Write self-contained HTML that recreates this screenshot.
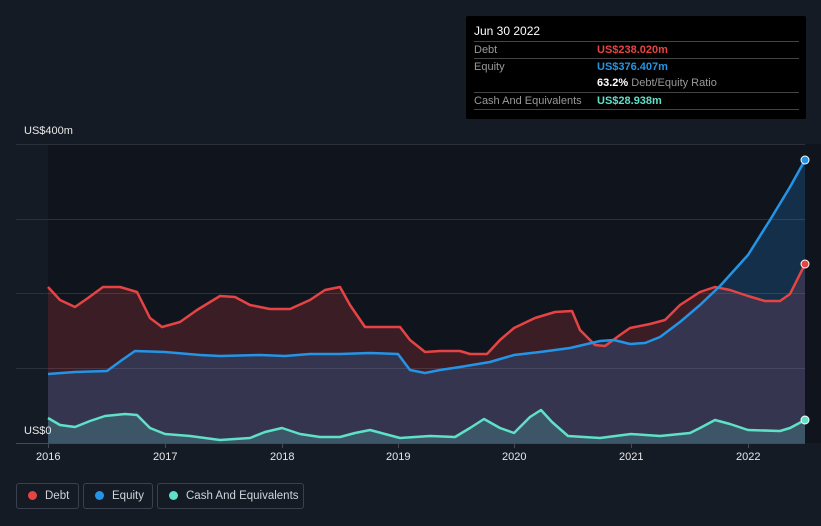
<!DOCTYPE html>
<html><head><meta charset="utf-8"><style>
html,body{margin:0;width:821px;height:526px;background:#151b25;font-family:"Liberation Sans",sans-serif;overflow:hidden;position:relative}
.tt{position:absolute;left:466px;top:16px;width:340px;height:103px;background:#000;border-radius:2px}
.tt .h{position:absolute;left:8px;top:8px;color:#fff;font-size:12px}
.row{position:absolute;left:8px;width:325px;border-top:1px solid #444;height:17px;line-height:17px;font-size:11px;color:#999;white-space:nowrap}
.row span{position:absolute;left:123px;top:0;font-weight:bold}
.row span.n{font-weight:normal}
.row b{font-weight:bold}
.lg{position:absolute;top:483px;height:26px;border:1px solid #3a414d;border-radius:3px;color:#cfd3da;font-size:11.5px;line-height:24px;box-sizing:border-box;white-space:nowrap;overflow:hidden}
.dot{display:inline-block;width:9px;height:9px;border-radius:50%;margin:0 8px 0 11px;vertical-align:-1px}
.ax{position:absolute;color:#e8e8e8;font-size:11px}
</style></head><body>
<svg width="821" height="526" style="position:absolute;left:0;top:0">
<rect x="48" y="144" width="773" height="299" fill="#10151d"/>
<g stroke="#2b313b" stroke-width="1"><line x1="16" y1="144.5" x2="805" y2="144.5"/><line x1="16" y1="219.5" x2="805" y2="219.5"/><line x1="16" y1="293.5" x2="805" y2="293.5"/><line x1="16" y1="368.5" x2="805" y2="368.5"/><line x1="16" y1="443.5" x2="805" y2="443.5" stroke="#444b55"/></g>
<polygon fill="rgba(233,65,70,0.2)" points="48,287 60,300 75,307 88,298 103,287 120,287 137,292 150,318 162,327 180,322 197,310 220,296 235,297 250,305 270,309 290,309 310,300 325,290 340,287 350,305 365,327 380,327 400,327 410,340 425,352 440,351 460,351 470,354 487,354 500,340 514,328 535,318 555,312 572,311 580,330 595,345 605,346 620,335 630,328 650,324 665,320 680,305 700,292 715,287 730,290 748,296 765,301 780,301 790,294 805,264 805,443 48,443"/>
<polygon fill="rgba(33,140,230,0.22)" points="48,374 75,372 107,371 122,360 135,351 165,352 200,355 220,356 260,355 285,356 310,354 340,354 370,353 398,354 410,370 425,373 440,370 460,367 490,362 514,355 540,352 570,348 600,341 614,340 630,344 645,343 660,337 680,322 700,305 720,286 748,255 770,220 790,187 805,160 805,443 48,443"/>
<polygon fill="rgba(90,220,200,0.2)" points="48,418 60,425 75,427 90,421 105,416 125,414 137,415 150,428 165,434 190,436 220,440 250,438 265,432 282,428 300,434 320,437 340,437 355,433 370,430 385,434 400,438 430,436 455,437 470,428 484,419 500,428 514,433 530,417 541,410 552,422 568,436 600,438 631,434 660,436 690,433 700,428 715,420 730,424 748,430 780,431 790,428 805,420 805,443 48,443"/>
<g fill="none" stroke-width="2.5" stroke-linejoin="round">
<polyline stroke="#e64444" points="48,287 60,300 75,307 88,298 103,287 120,287 137,292 150,318 162,327 180,322 197,310 220,296 235,297 250,305 270,309 290,309 310,300 325,290 340,287 350,305 365,327 380,327 400,327 410,340 425,352 440,351 460,351 470,354 487,354 500,340 514,328 535,318 555,312 572,311 580,330 595,345 605,346 620,335 630,328 650,324 665,320 680,305 700,292 715,287 730,290 748,296 765,301 780,301 790,294 805,264"/>
<polyline stroke="#2494e6" points="48,374 75,372 107,371 122,360 135,351 165,352 200,355 220,356 260,355 285,356 310,354 340,354 370,353 398,354 410,370 425,373 440,370 460,367 490,362 514,355 540,352 570,348 600,341 614,340 630,344 645,343 660,337 680,322 700,305 720,286 748,255 770,220 790,187 805,160"/>
<polyline stroke="#5fe0c8" points="48,418 60,425 75,427 90,421 105,416 125,414 137,415 150,428 165,434 190,436 220,440 250,438 265,432 282,428 300,434 320,437 340,437 355,433 370,430 385,434 400,438 430,436 455,437 470,428 484,419 500,428 514,433 530,417 541,410 552,422 568,436 600,438 631,434 660,436 690,433 700,428 715,420 730,424 748,430 780,431 790,428 805,420"/>
</g>
<circle cx="805" cy="160" r="4" fill="#2494e6" stroke="#fff" stroke-width="1"/>
<circle cx="805" cy="264" r="4" fill="#e64444" stroke="#fff" stroke-width="1"/>
<circle cx="805" cy="420" r="4" fill="#5fe0c8" stroke="#fff" stroke-width="1"/>
<g stroke="#444b55"><line x1="48.5" y1="443" x2="48.5" y2="448"/><line x1="165.5" y1="443" x2="165.5" y2="448"/><line x1="282.5" y1="443" x2="282.5" y2="448"/><line x1="398.5" y1="443" x2="398.5" y2="448"/><line x1="514.5" y1="443" x2="514.5" y2="448"/><line x1="631.5" y1="443" x2="631.5" y2="448"/><line x1="748.5" y1="443" x2="748.5" y2="448"/></g>
</svg>
<div class="ax" style="left:24px;top:125px">US$400m</div>
<div class="ax" style="left:24px;top:425px">US$0</div>
<div class="ax" style="left:36px;top:451px">2016</div>
<div class="ax" style="left:153px;top:451px">2017</div>
<div class="ax" style="left:270px;top:451px">2018</div>
<div class="ax" style="left:386px;top:451px">2019</div>
<div class="ax" style="left:502px;top:451px">2020</div>
<div class="ax" style="left:619px;top:451px">2021</div>
<div class="ax" style="left:736px;top:451px">2022</div>
<div class="tt">
<div class="h">Jun 30 2022</div>
<div class="row" style="top:25px">Debt<span style="color:#e64444">US$238.020m</span></div>
<div class="row" style="top:42px">Equity<span style="color:#2494e6">US$376.407m</span></div>
<div class="row" style="top:59px;border-top:none"><span class="n"><b style="color:#fff">63.2%</b> Debt/Equity Ratio</span></div>
<div class="row" style="top:76px">Cash And Equivalents<span style="color:#5fe0c8">US$28.938m</span></div>
<div class="row" style="top:93px;height:0"></div>
</div>
<div class="lg" style="left:16px;width:63px"><span class="dot" style="background:#e64444"></span>Debt</div>
<div class="lg" style="left:83px;width:70px"><span class="dot" style="background:#2494e6"></span>Equity</div>
<div class="lg" style="left:157px;width:147px"><span class="dot" style="background:#5fe0c8"></span>Cash And Equivalents</div>
</body></html>
